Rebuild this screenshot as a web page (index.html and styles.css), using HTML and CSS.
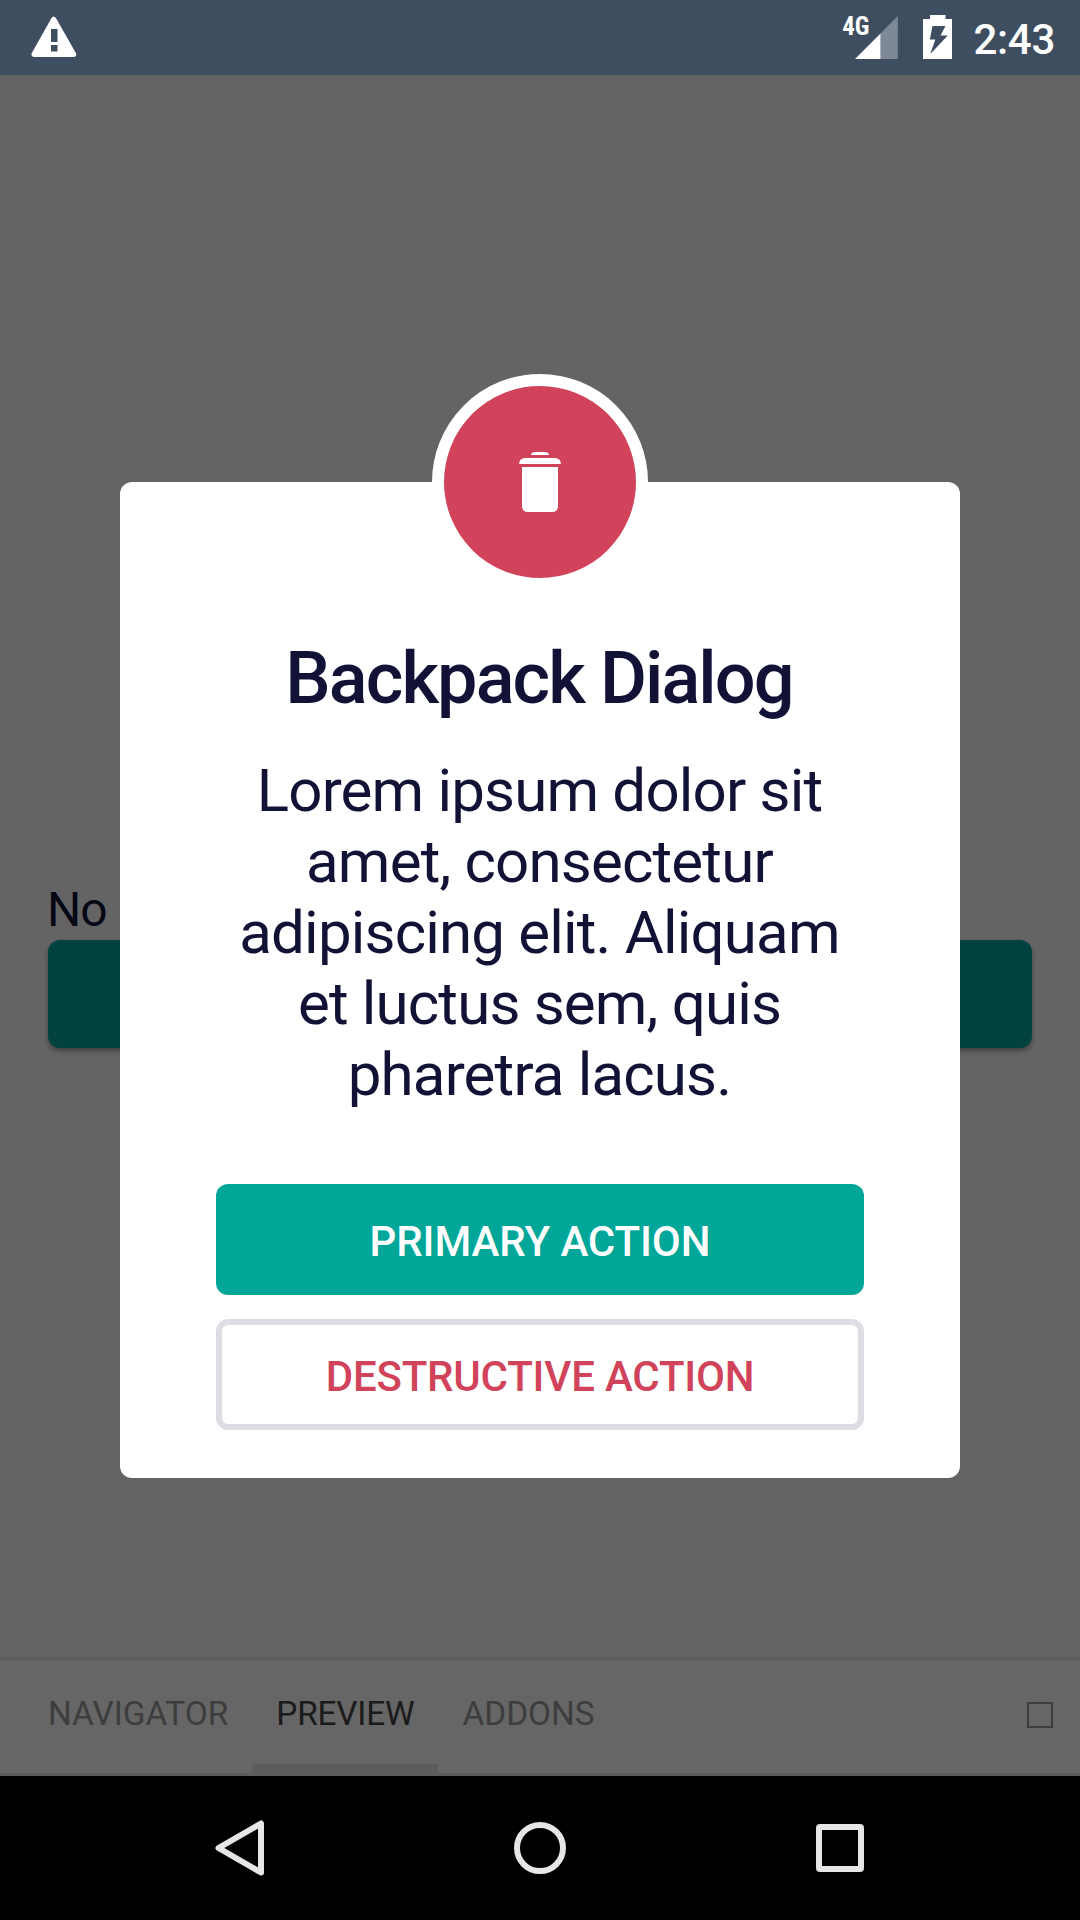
FILE: index.html
```html
<!DOCTYPE html>
<html lang="en">
<head>
<meta charset="utf-8">
<title>Backpack Dialog</title>
<link rel="stylesheet" href="styles.css">
</head>
<body>
<div class="device">
  <header class="status-bar">
    <svg class="warning" width="46" height="41" viewBox="0 0 46 41"><path fill="#fff" fill-rule="evenodd" d="M20.5 2Q22.7-1.2 24.9 2L45 37.2Q46 40.6 43 41H3Q-.4 40.6 .7 37.2ZM20 13V26H26.500V13ZM20 29V35.500H26.500V29Z"/></svg>
    <div class="status-icons">
      <span class="network">4G</span>
      <svg class="signal" width="43" height="43" viewBox="0 0 43 43"><path fill="#7f8896" d="M25.500 17.500L42.800 0V43H25.500Z"/><path fill="#fff" d="M0 43L25.500 17.500V43Z"/></svg>
      <svg class="battery" width="29" height="44" viewBox="0 0 29 44"><path fill="#fff" fill-rule="evenodd" d="M7 0H22.500V4H29V44H0V4H7ZM9.500 11L6.800 24.500H12.300L7.300 39L24.800 20.500H17.500L22.500 11Z"/></svg>
      <span class="clock">2:43</span>
    </div>
  </header>

  <div class="app">
    <main class="preview">
      <p class="state">No a</p>
      <div class="trigger"></div>
    </main>
    <nav class="tabs">
      <span class="tab">NAVIGATOR</span>
      <span class="tab tab-active">PREVIEW</span>
      <span class="tab">ADDONS</span>
      <span class="toggle"></span>
    </nav>

    <div class="scrim">
      <section class="dialog">
        <div class="badge">
          <svg width="42" height="60" viewBox="0 0 42 60" fill="#fff"><path d="M12 3Q12.500 0 16 0H26Q29.500 0 30 3ZM0 12Q.5 6 6 6H36Q41.500 6 42 12ZM3 15H39V54Q39 60 33 60H9Q3 60 3 54Z"/></svg>
        </div>
        <h1 class="title">Backpack Dialog</h1>
        <p class="description">Lorem ipsum dolor sit amet, consectetur adipiscing elit. Aliquam et luctus sem, quis pharetra lacus.</p>
        <div class="actions">
          <button class="action primary">PRIMARY ACTION</button>
          <button class="action destructive">DESTRUCTIVE ACTION</button>
        </div>
      </section>
    </div>
  </div>

  <footer class="nav-bar">
    <svg width="60" height="60" viewBox="0 0 60 60"><path d="M51 5.500V54.500L8.500 30Z"/></svg>
    <svg width="60" height="60" viewBox="0 0 60 60"><circle cx="30" cy="30" r="23"/></svg>
    <svg width="60" height="60" viewBox="0 0 60 60"><rect x="9" y="9" width="42" height="42" rx="1"/></svg>
  </footer>
</div>
</body>
</html>
```

FILE: styles.css
```css
* { box-sizing: border-box; }

body {
  margin: 0;
  font-family: Roboto, sans-serif;
}

p, h1 { margin: 0; }

svg { display: block; }

.device {
  display: flex;
  flex-direction: column;
  width: 1080px;
  height: 1920px;
  overflow: hidden;
}

.status-bar {
  display: flex;
  justify-content: space-between;
  height: 75px;
  padding: 15px 25px 0 31px;
  background: #3f4d60;
  color: #fff;
}

.warning { margin-top: 1px; }

.status-icons { display: flex; }

.network {
  margin-top: -1px;
  margin-right: -15px;
  font-family: "Roboto Condensed", Roboto, sans-serif;
  font-size: 25px;
  font-weight: 700;
  line-height: 25px;
}

.signal { margin-top: 1px; }

.battery { margin-left: 25px; }

.clock {
  margin-left: 22px;
  font-size: 42px;
  font-weight: 500;
  line-height: 49px;
  letter-spacing: -0.3px;
}

.app {
  position: relative;
  display: flex;
  flex: 1;
  flex-direction: column;
}

.preview {
  flex: 1;
  padding: 805px 48px 0;
  background: #fafafa;
}

.state {
  margin-left: -1px;
  color: #111236;
  font-size: 48px;
  line-height: 60px;
  letter-spacing: -1px;
  white-space: nowrap;
}

.trigger {
  height: 108px;
  border-radius: 12px;
  background: #00a698;
  box-shadow: 0 3px 5px rgba(0, 0, 0, 0.35);
}

.tabs {
  display: flex;
  height: 119px;
  padding: 0 27px 0 24px;
  border-top: 3px solid #e6e6e6;
  border-bottom: 3px solid #e6e6e6;
  background: #fff;
}

.tab {
  padding: 32px 24px 0;
  border-bottom: 9px solid transparent;
  color: #999;
  font-size: 33.4px;
  line-height: 44px;
}

.tab-active {
  border-bottom-color: #e6e6e6;
  color: #444;
  letter-spacing: -0.2px;
}

.toggle {
  width: 26px;
  height: 26px;
  margin: 42px 0 0 auto;
  border: 2px solid #999;
}

/* Modal layer, dims the app beneath it */
.scrim {
  position: absolute;
  inset: 0;
  display: flex;
  align-items: flex-start;
  justify-content: center;
  padding-top: 407px;
  background: rgba(0, 0, 0, 0.6);
}

.dialog {
  display: flex;
  flex-direction: column;
  align-items: center;
  width: 840px;
  height: 996px;
  padding: 0 96px 48px;
  border-radius: 12px;
  background: #fff;
  color: #111236;
  text-align: center;
}

.badge {
  display: flex;
  flex: none;
  align-items: center;
  justify-content: center;
  width: 216px;
  height: 216px;
  margin-top: -108px;
  border: 12px solid #fff;
  border-radius: 50%;
  background: #d1435b;
}

.title {
  margin-top: 47px;
  padding-right: 2px;
  font-size: 72px;
  font-weight: 500;
  line-height: 84px;
  letter-spacing: -1.9px;
}

.description {
  width: 630px;
  margin-top: 34px;
  padding-right: 1px;
  font-size: 60px;
  line-height: 71px;
  letter-spacing: -0.82px;
}

.actions {
  display: flex;
  flex-direction: column;
  gap: 24px;
  width: 100%;
  margin-top: auto;
}

.action {
  height: 111px;
  padding: 3px 0 0;
  border: 0;
  border-radius: 12px;
  font: 500 42px Roboto, sans-serif;
  letter-spacing: -0.2px;
}

.primary {
  background: #00a698;
  color: #fff;
  letter-spacing: -0.1px;
}

.destructive {
  border: 6px solid #dddde5;
  background: #fff;
  color: #d1435b;
}

.nav-bar {
  display: flex;
  justify-content: space-between;
  height: 144px;
  padding: 42px 210px;
  background: #000;
}

.nav-bar svg {
  fill: none;
  stroke: #e6e6e6;
  stroke-width: 6;
  stroke-linejoin: round;
}
```
